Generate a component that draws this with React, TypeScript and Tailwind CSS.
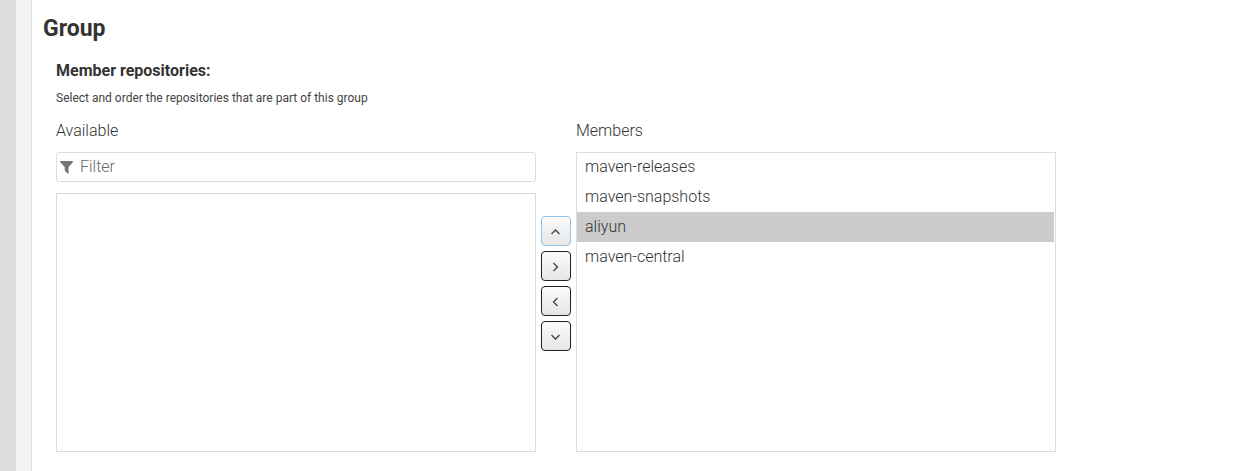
import { useState } from "react";

const initialMembers = ["maven-releases", "maven-snapshots", "aliyun", "maven-central"];

type MoveButtonProps = {
  label: string;
  points: string;
  active?: boolean;
  onClick?: () => void;
};

function MoveButton({ label, points, active = false, onClick }: MoveButtonProps) {
  return (
    <button
      type="button"
      aria-label={label}
      onClick={onClick}
      className={`flex size-[30px] items-center justify-center rounded-[4px] border bg-linear-to-b from-[#fbfbfb] to-[#e6e6e6] ${
        active ? "border-[#8fc4e8]" : "border-[#222222]"
      }`}
    >
      <svg
        className="size-4"
        viewBox="0 0 16 16"
        fill="none"
        stroke="#444444"
        strokeWidth="1.3"
        aria-hidden="true"
      >
        <polyline points={points} />
      </svg>
    </button>
  );
}

function FilterIcon() {
  return (
    <svg className="ml-[3px] h-4 w-[14px] shrink-0" viewBox="0 0 14 16" fill="#777777" aria-hidden="true">
      <path d="M.6 2h11.800q1 .5.4 1.2L8.600 8v6.300q-.3.7-1 .3l-2.400-2.300L4.700 11.600V8L.3 3.200Q-.2 2.500.6 2z" />
    </svg>
  );
}

export default function App() {
  const [members, setMembers] = useState(initialMembers);
  const [selected, setSelected] = useState("aliyun");

  const move = (step: number) => {
    const from = members.indexOf(selected);
    const to = from + step;
    if (from < 0 || to < 0 || to >= members.length) return;
    const next = [...members];
    next[from] = next[to];
    next[to] = selected;
    setMembers(next);
  };

  return (
    <div className="flex min-h-screen bg-white font-['Roboto',sans-serif] text-base font-light text-[#333333]">
      <div className="w-4 shrink-0 bg-[#dcdcdc]" />
      <div className="w-4 shrink-0 border-r border-[#dcdcdc] bg-[#f3f3f3]" />
      <main className="min-w-0 grow pt-[17px] pr-6 pl-[11px]">
        <h1 className="text-[23px] leading-6 font-bold">Group</h1>
        <div className="max-w-[1013px] pt-5 pl-[13px]">
          <h2 className="leading-5 font-bold">Member repositories:</h2>
          <p className="mt-[7px] text-[12px] leading-5 font-normal text-[#444444]">
            Select and order the repositories that are part of this group
          </p>
          <div className="mt-[13px] flex">
            <section className="flex min-w-0 flex-1 flex-col">
              <h3 className="leading-5">Available</h3>
              <div className="mt-[11px] flex h-[30px] items-center rounded-[3px] border border-[#dcdcdc]">
                <FilterIcon />
                <input
                  type="text"
                  aria-label="Filter"
                  placeholder="Filter"
                  className="ml-[6px] min-w-0 grow bg-transparent leading-5 outline-none placeholder:text-[#666666]"
                />
              </div>
              <ul aria-label="Available" className="mt-[11px] grow border border-[#dcdcdc]" />
            </section>
            <div className="flex w-10 shrink-0 flex-col items-center gap-[5px] pt-[95px]">
              <MoveButton label="Move up" points="3.500,11 7.500,7 11.500,11" active onClick={() => move(-1)} />
              <MoveButton label="Add to members" points="5.500,5 9.500,9 5.500,13" />
              <MoveButton label="Remove from members" points="9.500,5 5.500,9 9.500,13" />
              <MoveButton label="Move down" points="3.500,7 7.500,11 11.500,7" onClick={() => move(1)} />
            </div>
            <section className="min-w-0 flex-1">
              <h3 className="leading-5">Members</h3>
              <ul
                aria-label="Members"
                className="mt-[11px] h-[300px] overflow-hidden pr-0.5 pl-px ring-1 ring-[#dcdcdc] ring-inset"
              >
                {members.map((name) => (
                  <li key={name}>
                    <button
                      type="button"
                      aria-pressed={name === selected}
                      onClick={() => setSelected(name)}
                      className={`block h-[30px] w-full truncate px-2 text-left ${
                        name === selected ? "bg-[#cccccc]" : ""
                      }`}
                    >
                      {name}
                    </button>
                  </li>
                ))}
              </ul>
            </section>
          </div>
        </div>
      </main>
    </div>
  );
}
